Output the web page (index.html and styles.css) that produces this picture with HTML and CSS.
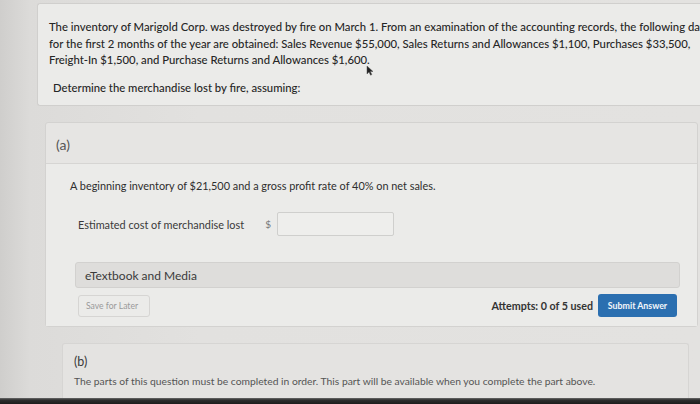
FILE: index.html
```html
<!DOCTYPE html>
<html lang="en">
<head>
<meta charset="utf-8">
<title>Marigold Corp.</title>
<link rel="stylesheet" href="styles.css">
</head>
<body>
<div class="screen">
  <main class="page">
    <section class="intro">
      <p class="intro-text">The inventory of Marigold Corp. was destroyed by fire on March 1. From an examination of the accounting records, the following data for the first 2 months of the year are obtained: Sales Revenue $55,000, Sales Returns and Allowances $1,100, Purchases $33,500, Freight-In $1,500, and Purchase Returns and Allowances $1,600.</p>
      <p class="intro-ask">Determine the merchandise lost by fire, assuming:</p>
    </section>

    <section class="part part-a">
      <header class="part-head">(a)</header>
      <div class="part-body">
        <p class="assume">A beginning inventory of $21,500 and a gross profit rate of 40% on net sales.</p>
        <div class="answer-row">
          <span class="answer-label">Estimated cost of merchandise lost</span>
          <span class="dollar">$</span>
          <span class="answer-input"></span>
        </div>
        <div class="media-bar">eTextbook and Media</div>
        <div class="actions">
          <span class="btn-save">Save for Later</span>
          <span class="attempts">Attempts: 0 of 5 used</span>
          <span class="btn-submit">Submit Answer</span>
        </div>
      </div>
    </section>

    <section class="part part-b">
      <header class="part-b-head">(b)</header>
      <p class="part-b-note">The parts of this question must be completed in order. This part will be available when you complete the part above.</p>
    </section>
  </main>
  <div class="bezel"></div>
  <svg class="cursor" width="8" height="11" viewBox="0 0 8 11" aria-hidden="true">
    <path d="M1 1 L1 9 L3 7 L4.6 10.2 L5.8 9.6 L4.3 6.5 L7 6.5 Z" fill="#222" stroke="#555" stroke-width="0.5"/>
  </svg>
</div>
</body>
</html>
```

FILE: styles.css
```css
html, body {
  margin: 0;
  padding: 0;
}
body {
  width: 700px;
  height: 404px;
  overflow: hidden;
  font-family: Lato, "Open Sans", sans-serif;
  color: #2e2e2e;
  background: linear-gradient(90deg, #cfcecc 0px, #dcdbd9 30px, #e2e1df 200px, #e3e2e0 700px);
}
.screen {
  position: relative;
  height: 404px;
  display: flex;
  flex-direction: column;
}
.page {
  flex: 1;
  padding: 3px 0 0 37px;
  overflow: hidden;
}
p { margin: 0; }

.cursor {
  position: absolute;
  left: 366px;
  top: 65px;
}

.intro {
  background: #ebebe9;
  border: 1px solid #d0cfcd;
  border-right: none;
  border-radius: 3px 0 0 3px;
  padding: 15px 0 0 11px;
  height: 103px;
  width: 700px;
  box-sizing: border-box;
}
.intro-text {
  font-size: 11.3px;
  line-height: 16.5px;
  width: 670px;
  color: #262626;
  font-weight: 500;
}
.intro-ask {
  margin-top: 12px;
  margin-left: 4px;
  font-size: 11.3px;
  color: #262626;
  font-weight: 500;
}

.part-a {
  margin: 16px 0 0 8px;
  width: 651px;
  border: 1px solid #d3d2d0;
  border-radius: 3px;
  background: #e6e5e3;
}
.part-head {
  height: 41px;
  padding: 13px 0 0 10px;
  box-sizing: border-box;
  font-size: 14px;
  color: #555;
  border-bottom: 1px solid #d6d5d3;
}
.part-body {
  background: #ebebe9;
  padding: 15px 0 9px 24px;
}
.assume {
  font-size: 10.9px;
  color: #2e2e2e;
}
.answer-row {
  display: flex;
  align-items: center;
  margin: 20px 0 0 8px;
}
.answer-label {
  font-size: 10.9px;
  color: #3a3a3a;
}
.dollar {
  font-size: 10px;
  color: #777;
  margin-left: 21px;
}
.answer-input {
  width: 115px;
  height: 22px;
  margin-left: 6px;
  border: 1px solid #cfcfcd;
  border-radius: 2px;
  background: #eeeeec;
}
.media-bar {
  margin: 26px 0 0 5px;
  width: 605px;
  height: 26px;
  box-sizing: border-box;
  background: #dedddb;
  border: 1px solid #d2d1cf;
  border-radius: 3px;
  font-size: 12px;
  color: #3a3a3a;
  padding: 5px 0 0 9px;
}
.actions {
  display: flex;
  align-items: center;
  margin: 6px 0 0 8px;
  width: 599px;
}
.btn-save {
  width: 72px;
  height: 22px;
  box-sizing: border-box;
  border: 1px solid #d6d5d3;
  border-radius: 3px;
  font-size: 8.6px;
  color: #9a9a9a;
  padding: 5px 0 0 7px;
}
.attempts {
  margin-left: auto;
  font-size: 10.7px;
  font-weight: 700;
  color: #333;
}
.btn-submit {
  margin-left: 5px;
  width: 79px;
  height: 23px;
  box-sizing: border-box;
  background: #2b6fb0;
  border-radius: 3px;
  color: #f2f6fa;
  font-size: 8.8px;
  font-weight: 700;
  text-align: center;
  padding-top: 6px;
}

.part-b {
  margin: 16px 0 0 25px;
  width: 627px;
  height: 60px;
  box-sizing: border-box;
  border: 1px solid #d6d5d3;
  border-bottom: none;
  border-radius: 3px 3px 0 0;
  background: #e4e3e1;
  padding: 10px 0 0 11px;
}
.part-b-head {
  font-size: 12.5px;
  color: #3a3a3a;
}
.part-b-note {
  margin-top: 6px;
  font-size: 10.3px;
  color: #555;
}

.bezel {
  height: 6px;
  background: linear-gradient(180deg, #6a6a6a 0px, #2e2e2e 2px, #1c1c1c 6px);
}
```
